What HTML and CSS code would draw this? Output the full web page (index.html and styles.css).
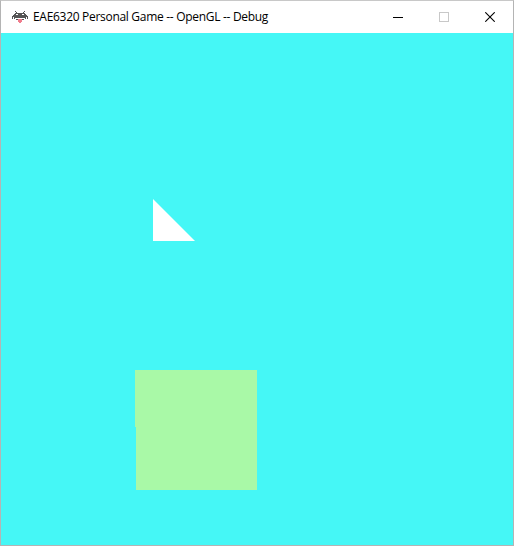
FILE: index.html
```html
<!DOCTYPE html>
<html>
<head>
<meta charset="utf-8">
<link rel="stylesheet" href="styles.css">
</head>
<body>
<div class="window">
  <div class="titlebar">
    <svg class="appicon" width="16" height="14" viewBox="0 0 16 14">
      <g fill="#555">
        <rect x="3" y="0" width="1" height="1"/><rect x="12" y="0" width="1" height="1"/>
        <rect x="4" y="1" width="1" height="1"/><rect x="11" y="1" width="1" height="1"/>
        <rect x="3" y="2" width="10" height="1"/>
        <rect x="2" y="3" width="2" height="1"/><rect x="6" y="3" width="4" height="1"/><rect x="12" y="3" width="2" height="1"/>
        <rect x="1" y="4" width="14" height="1"/>
        <rect x="0" y="5" width="16" height="1"/>
        <rect x="0" y="6" width="1" height="2"/><rect x="2" y="6" width="12" height="1"/><rect x="15" y="6" width="1" height="2"/>
        <rect x="2" y="7" width="1" height="1"/><rect x="13" y="7" width="1" height="1"/>
        <rect x="4" y="8" width="2" height="1"/><rect x="10" y="8" width="2" height="1"/>
      </g>
      <rect x="6" y="8" width="4" height="3" fill="#f07c8c"/>
      <rect x="7" y="11" width="2" height="1" fill="#f07c8c"/>
    </svg>
    <span class="title">EAE6320 Personal Game -- OpenGL -- Debug</span>
    <div class="controls">
      <div class="btn"><svg width="10" height="10" viewBox="0 0 10 10"><rect x="0" y="5" width="10" height="1" fill="#000"/></svg></div>
      <div class="btn"><svg width="10" height="10" viewBox="0 0 10 10"><rect x="0.5" y="0.5" width="9" height="9" fill="none" stroke="#c8c8c8"/></svg></div>
      <div class="btn"><svg width="10" height="10" viewBox="0 0 10 10"><path d="M0.3 0.3L9.7 9.7M9.7 0.3L0.3 9.7" stroke="#000" stroke-width="1.1"/></svg></div>
    </div>
  </div>
  <div class="canvas">
    <div class="tri"></div>
    <div class="quad"></div>
  </div>
</div>
</body>
</html>
```
FILE: styles.css
```css
html, body {
  margin: 0;
  padding: 0;
  background: #fff;
}
.window {
  width: 512px;
  height: 544px;
  border: 1px solid #b4b4b4;
  border-top-color: #c8c8c8;
  display: flex;
  flex-direction: column;
  background: #fff;
}
.titlebar {
  height: 32px;
  display: flex;
  align-items: center;
  background: #fff;
  font-family: "Open Sans", "Noto Sans", sans-serif;
  font-size: 12px;
  color: #000;
}
.appicon {
  margin-left: 11px;
  margin-right: 5px;
  margin-top: 1px;
}
.title {
  letter-spacing: -0.3px;
  margin-top: -1px;
}
.controls {
  margin-left: auto;
  display: flex;
  height: 100%;
}
.btn {
  width: 46px;
  height: 32px;
  display: flex;
  align-items: center;
  justify-content: center;
}
.canvas {
  position: relative;
  width: 512px;
  height: 512px;
  background: #45f7f6;
  overflow: hidden;
}
.tri {
  position: absolute;
  left: 152px;
  top: 166px;
  width: 42px;
  height: 42px;
  background: #fff;
  clip-path: polygon(0 0, 100% 100%, 0 100%);
}
.quad {
  position: absolute;
  left: 134px;
  top: 337px;
  width: 122px;
  height: 120px;
  background: #a9f9a7;
  clip-path: polygon(0 0, 100% 0, 100% 100%, 1px 100%, 1px 57px, 0 57px);
}
```
